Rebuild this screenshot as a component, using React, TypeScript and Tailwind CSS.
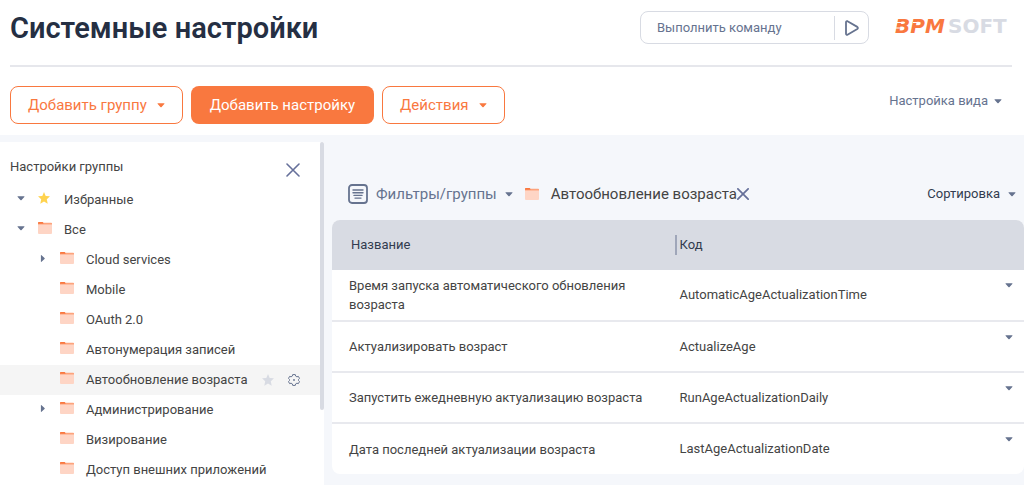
import clsx from 'clsx';

type TreeNode = {
  title: string;
  level: 0 | 1;
  icon: 'star' | 'folder';
  expander?: 'open' | 'closed';
  selected?: boolean;
};

type Setting = {
  name: string;
  code: string;
};

const tree: TreeNode[] = [
  { title: 'Избранные', level: 0, icon: 'star', expander: 'open' },
  { title: 'Все', level: 0, icon: 'folder', expander: 'open' },
  { title: 'Cloud services', level: 1, icon: 'folder', expander: 'closed' },
  { title: 'Mobile', level: 1, icon: 'folder' },
  { title: 'OAuth 2.0', level: 1, icon: 'folder' },
  { title: 'Автонумерация записей', level: 1, icon: 'folder' },
  { title: 'Автообновление возраста', level: 1, icon: 'folder', selected: true },
  { title: 'Администрирование', level: 1, icon: 'folder', expander: 'closed' },
  { title: 'Визирование', level: 1, icon: 'folder' },
  { title: 'Доступ внешних приложений', level: 1, icon: 'folder' },
];

const settings: Setting[] = [
  { name: 'Время запуска автоматического обновления возраста', code: 'AutomaticAgeActualizationTime' },
  { name: 'Актуализировать возраст', code: 'ActualizeAge' },
  { name: 'Запустить ежедневную актуализацию возраста', code: 'RunAgeActualizationDaily' },
  { name: 'Дата последней актуализации возраста', code: 'LastAgeActualizationDate' },
];

function Caret({ className }: { className?: string }) {
  return (
    <svg viewBox="0 0 8 5" className={clsx('h-[5px] w-2 shrink-0', className)} fill="currentColor" aria-hidden="true">
      <path d="M1 0.300h6c.5 0 .6.400.3.700L4.600 4a.8.8 0 0 1-1.200 0L.7 1C.4.7.5.3 1 .3z" />
    </svg>
  );
}

function FolderIcon() {
  return (
    <svg viewBox="0 0 14 12" className="h-3 w-3.5 shrink-0" aria-hidden="true">
      <path d="M0 1h14v10a1 1 0 0 1-1 1H1a1 1 0 0 1-1-1z" fill="#fed5c5" />
      <path d="M0 .8h13.200a.8.8 0 0 1 .8.800V2.600H0z" fill="#fda37c" />
      <path d="M0 .7A.7.7 0 0 1 .7 0h4l1 1.200L5 1.800H0z" fill="#f9783f" />
    </svg>
  );
}

function StarIcon({ className }: { className?: string }) {
  return (
    <svg viewBox="0 0 12 12" className={clsx('size-3 shrink-0', className)} fill="currentColor" aria-hidden="true">
      <path d="M6 0l1.700 3.900 4.300.4-3.200 2.900.9 4.500L6 9.500l-3.700 2.200.9-4.500L0 4.300l4.300-.4z" />
    </svg>
  );
}

function GearIcon() {
  return (
    <svg viewBox="0 0 12 12" className="size-3" fill="none" stroke="currentColor" strokeLinejoin="round" aria-hidden="true">
      <path d="M4.700.6h2.600l.4 1.500 1.200.7 1.500-.4 1.100 2-1 1.100v1l1 1.100-1.100 2-1.500-.4-1.200.7-.4 1.500H4.700l-.4-1.500-1.200-.7-1.500.4-1.100-2 1-1.100v-1l-1-1.100 1.100-2 1.500.4 1.200-.7z" />
      <circle cx="6" cy="6" r="0.900" fill="currentColor" stroke="none" />
    </svg>
  );
}

function CrossIcon({ className }: { className?: string }) {
  return (
    <svg viewBox="0 0 14 14" className={className} fill="none" stroke="currentColor" strokeLinecap="round" aria-hidden="true">
      <path d="M1 1l12 12M13 1L1 13" />
    </svg>
  );
}

function Logo() {
  return (
    <svg viewBox="0 0 118 24" className="h-6 w-[118px]" role="img" aria-label="BPMSoft">
      <text y="19" fontSize="20" fontWeight="700" fontFamily="DejaVu Sans, sans-serif">
        <tspan x="2" fill="#f9783f" fontStyle="italic">BPM</tspan>
        <tspan x="55" fill="#d8dbe3">SOFT</tspan>
      </text>
      <path d="M0 8.500h9M0 14h8M20 8.500h4" stroke="#ffffff" strokeWidth="1.200" />
    </svg>
  );
}

function Header() {
  return (
    <header className="mx-2.5 mr-3 flex h-[67px] items-start border-b-2 border-[#e6e7ec]">
      <h1 className="flex-1 pt-2.5 text-[29px] leading-9 font-semibold text-[#252f43]">Системные настройки</h1>
      <div className="mt-[11px] mr-6 flex h-[33px] w-[229px] items-center rounded-lg border border-[#d8dbe3]">
        <input
          type="text"
          aria-label="Выполнить команду"
          placeholder="Выполнить команду"
          className="min-w-0 flex-1 pl-4 text-[13px] text-[#66738f] outline-none placeholder:text-[#66738f]"
        />
        <button type="button" aria-label="Выполнить" className="flex h-6 w-[34px] items-center justify-center border-l border-[#d8dbe3] text-[#66738f]">
          <svg viewBox="0 0 14 16" className="h-4 w-3.5" fill="none" stroke="currentColor" strokeWidth="1.800" strokeLinejoin="round" aria-hidden="true">
            <path d="M1 2.200C1 1.300 1.800.9 2.500 1.200l9.800 5.700c.8.500.8 1.500 0 2L2.500 14.700c-.7.400-1.500 0-1.500-.9z" />
          </svg>
        </button>
      </div>
      <div className="w-[119px] shrink-0 pt-3.5">
        <Logo />
      </div>
    </header>
  );
}

function Toolbar() {
  const outlined = 'flex h-[38px] items-center gap-2.5 rounded-lg border border-[#f9783f] px-[17px] text-[#f9783f]';
  return (
    <div className="flex items-center gap-2 px-2.5 pt-[19px] pb-[11px] text-[15px]">
      <button type="button" className={outlined}>
        Добавить группу
        <Caret />
      </button>
      <button type="button" className="h-[38px] rounded-lg bg-[#f9783f] px-[19px] text-white">
        Добавить настройку
      </button>
      <button type="button" className={outlined}>
        Действия
        <Caret />
      </button>
      <button type="button" className="mr-3 mb-2 ml-auto flex items-center gap-1.5 text-[13px] text-[#66738f]">
        Настройка вида
        <Caret />
      </button>
    </div>
  );
}

function TreeRow({ node }: { node: TreeNode }) {
  return (
    <li
      className={clsx(
        'flex h-[30px] items-center pr-5',
        node.level === 0 ? 'pl-[17px]' : 'pl-[39px]',
        node.selected && 'bg-[#f5f5f5]',
      )}
    >
      <span className="flex w-[21px] shrink-0 pb-1 text-[#66738f]">
        {node.expander && (
          <button type="button" aria-label={node.title} aria-expanded={node.expander === 'open'}>
            <Caret className={node.expander === 'closed' ? '-rotate-90' : ''} />
          </button>
        )}
      </span>
      <span className="w-[26px] shrink-0 pb-1">
        {node.icon === 'star' ? <StarIcon className="text-[#ffd34f]" /> : <FolderIcon />}
      </span>
      <span className="flex-1 whitespace-nowrap">{node.title}</span>
      {node.selected && (
        <>
          <button type="button" aria-label="В избранное" className="mr-3.5 text-[#d8dbe3]">
            <StarIcon />
          </button>
          <button type="button" aria-label="Настроить" className="text-[#66738f]">
            <GearIcon />
          </button>
        </>
      )}
    </li>
  );
}

function GroupsPanel() {
  return (
    <aside className="mt-[7px] flex w-[324px] shrink-0 bg-white text-[13px] text-[#444444]">
      <div className="flex-1">
        <div className="flex h-[43px] items-center justify-between pr-5 pl-2.5">
          <h2 className="pt-1.5">Настройки группы</h2>
          <button type="button" aria-label="Закрыть" className="pt-3 text-[#66709a]">
            <CrossIcon className="size-3.5 stroke-[1.600]" />
          </button>
        </div>
        <ul>
          {tree.map((node) => (
            <TreeRow key={node.title} node={node} />
          ))}
        </ul>
      </div>
      <div className="w-1">
        <div className="h-[78%] rounded-full bg-[#d8dbe3]" />
      </div>
    </aside>
  );
}

function FilterBar() {
  return (
    <div className="flex items-center pt-[49px] pr-2 pb-4 pl-4 text-[15px] leading-5">
      <button type="button" className="flex items-center text-[#66738f]">
        <svg viewBox="0 0 20 20" className="mr-2 size-5" fill="none" stroke="currentColor" strokeWidth="1.800" strokeLinecap="round" aria-hidden="true">
          <rect x="1" y="1" width="18" height="18" rx="3" />
          <path d="M5 6h10M5 8.700h10M6 11.400h8M7 14.100h6" strokeWidth="1.400" />
        </svg>
        Фильтры/группы
        <Caret className="ml-2" />
      </button>
      <span className="ml-3 flex items-center gap-3 text-[#444444]">
        <FolderIcon />
        Автообновление возраста
      </span>
      <button type="button" aria-label="Убрать фильтр" className="text-[#66709a]">
        <CrossIcon className="size-3 stroke-2" />
      </button>
      <button type="button" className="ml-auto flex items-center gap-2 text-[13px] text-[#323c4f]">
        Сортировка
        <Caret className="text-[#66738f]" />
      </button>
    </div>
  );
}

function SettingsTable() {
  return (
    <div className="overflow-hidden rounded-lg bg-white">
      <table className="w-full table-fixed border-collapse text-left text-[13px] text-[#444444]">
        <thead>
          <tr className="h-[50px] bg-[#d8dbe3] text-[#323c4f]">
            <th className="w-[49.5%] pl-[19px] font-normal">Название</th>
            <th className="font-normal">
              <span className="flex h-5 items-center border-l-2 border-[#9fa6b9] pl-[3px]">Код</span>
            </th>
            <th className="w-[30px]" aria-label="Действия" />
          </tr>
        </thead>
        <tbody>
          {settings.map((row) => (
            <tr key={row.code} className="h-[51px] border-b-2 border-[#e8e9ee] last:border-0">
              <td className="pr-8 pl-[17px] leading-[19px]">{row.name}</td>
              <td className="pl-[5px]">{row.code}</td>
              <td className="pt-[13px] pl-[11px] align-top">
                <button type="button" aria-label={`Меню: ${row.code}`} className="flex text-[#66738f]">
                  <Caret />
                </button>
              </td>
            </tr>
          ))}
        </tbody>
      </table>
    </div>
  );
}

export default function App() {
  return (
    <div className="flex h-screen flex-col overflow-hidden bg-white font-['Roboto',sans-serif]">
      <Header />
      <Toolbar />
      <div className="flex min-h-0 flex-1 bg-[#f5f7fb]">
        <GroupsPanel />
        <main className="min-w-0 flex-1 pl-2">
          <FilterBar />
          <SettingsTable />
        </main>
      </div>
    </div>
  );
}
